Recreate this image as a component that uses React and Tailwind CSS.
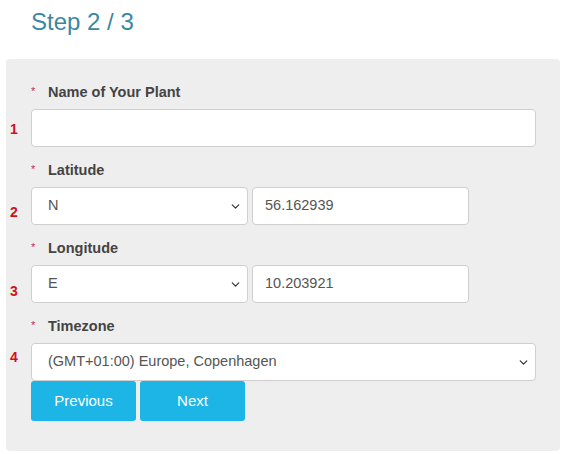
import { ChevronDown } from 'lucide-react';

function Label({ children }) {
  return (
    <div className="flex items-center h-5 mb-[6px]">
      <span className="w-[17px] text-[11px] text-[#c9302c] leading-none -mt-1">*</span>
      <span className="text-[14.5px] font-bold text-[#444]">{children}</span>
    </div>
  );
}

function Select({ value, className = '' }) {
  return (
    <div className={`relative h-[38px] bg-white border border-[#cfcfcf] rounded-[4px] flex items-center pl-4 text-[14.5px] text-[#555] ${className}`}>
      {value}
      <ChevronDown size={13} strokeWidth={2.2} className="absolute right-[5px] text-[#333]" />
    </div>
  );
}

function TextInput({ value, className = '' }) {
  return (
    <div className={`h-[38px] bg-white border border-[#cfcfcf] rounded-[4px] flex items-center pl-3 text-[14.5px] text-[#555] ${className}`}>
      {value}
    </div>
  );
}

export default function App() {
  const marks = [
    { n: 1, top: 119 },
    { n: 2, top: 202 },
    { n: 3, top: 281 },
    { n: 4, top: 347 },
  ];
  return (
    <div className="relative w-[563px] h-[454px] bg-white font-['Liberation_Sans',Arial,sans-serif]">
      <h1 className="pl-[31px] pt-[8px] text-[24px] leading-[28px] text-[#3a87a3]">Step 2 / 3</h1>
      <div className="mt-[23px] mx-[6px] mr-[3px] bg-[#eeeeee] rounded-[4px] pt-[24px] pb-[30px] pl-[25px] pr-[24px]">
        <Label>Name of Your Plant</Label>
        <TextInput value="" className="w-[505px]" />

        <div className="mt-[14px]">
          <Label>Latitude</Label>
          <div className="flex gap-1">
            <Select value="N" className="w-[217px]" />
            <TextInput value="56.162939" className="w-[217px]" />
          </div>
        </div>

        <div className="mt-[14px]">
          <Label>Longitude</Label>
          <div className="flex gap-1">
            <Select value="E" className="w-[217px]" />
            <TextInput value="10.203921" className="w-[217px]" />
          </div>
        </div>

        <div className="mt-[14px]">
          <Label>Timezone</Label>
          <Select value="(GMT+01:00) Europe, Copenhagen" className="w-[505px]" />
          <div className="flex gap-1">
            <button className="w-[105px] h-[40px] bg-[#1cb5e6] rounded-[3px] text-white text-[15px]">Previous</button>
            <button className="w-[105px] h-[40px] bg-[#1cb5e6] rounded-[3px] text-white text-[15px]">Next</button>
          </div>
        </div>
      </div>
      {marks.map(m => (
        <span key={m.n} className="absolute left-[10px] text-[14px] font-bold text-[#d0101e]" style={{ top: m.top }}>
          {m.n}
        </span>
      ))}
    </div>
  );
}
